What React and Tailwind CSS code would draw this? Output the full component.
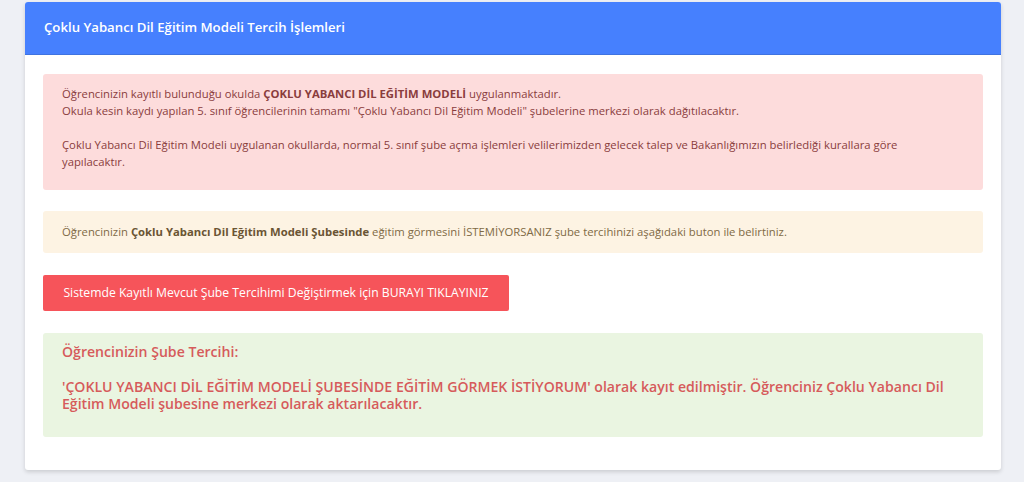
export default function App() {
  return (
    <div className="w-[1024px] h-[482px] bg-[#eef0f5] overflow-hidden" style={{ fontFamily: '"Open Sans", "Noto Sans", sans-serif' }}>
      <div className="ml-[25px] mt-[2px] w-[976px] bg-white rounded-[3px] shadow-[0_2px_4px_rgba(0,0,0,0.15)]">
        <div className="h-[53px] bg-[#4680fe] rounded-t-[3px] flex items-center pl-[19px] border-b border-[#3f73e0]">
          <span className="text-white text-[13.2px] font-semibold">Çoklu Yabancı Dil Eğitim Modeli Tercih İşlemleri</span>
        </div>
        <div className="px-[18px] pt-[19px] pb-[33px] flex flex-col">
          <div className="bg-[#fddcdc] rounded-[3px] pl-[19px] pr-[19px] pt-[11px] pb-[20px] text-[11.3px] leading-[17px] text-[#8a3d3d]">
            <p>Öğrencinizin kayıtlı bulunduğu okulda <b className="font-bold">ÇOKLU YABANCI DİL EĞİTİM MODELİ</b> uygulanmaktadır.</p>
            <p>Okula kesin kaydı yapılan 5. sınıf öğrencilerinin tamamı "Çoklu Yabancı Dil Eğitim Modeli" şubelerine merkezi olarak dağıtılacaktır.</p>
            <p className="mt-[17px] pr-[40px]">Çoklu Yabancı Dil Eğitim Modeli uygulanan okullarda, normal 5. sınıf şube açma işlemleri velilerimizden gelecek talep ve Bakanlığımızın belirlediği kurallara göre yapılacaktır.</p>
          </div>
          <div className="mt-[21px] h-[42px] bg-[#fdf3e3] rounded-[3px] pl-[19px] flex items-center text-[11.3px] text-[#7f6a45]">
            <p>Öğrencinizin <b className="font-bold text-[#6b5534]">Çoklu Yabancı Dil Eğitim Modeli Şubesinde</b> eğitim görmesini İSTEMİYORSANIZ şube tercihinizi aşağıdaki buton ile belirtiniz.</p>
          </div>
          <div className="mt-[22px]">
            <button className="w-[466px] h-[36px] bg-[#f6545a] rounded-[2px] text-white text-[12.2px]">Sistemde Kayıtlı Mevcut Şube Tercihimi Değiştirmek için BURAYI TIKLAYINIZ</button>
          </div>
          <div className="mt-[22px] h-[104px] bg-[#eaf5e1] rounded-[3px] pl-[19px] pr-[19px] pt-[10px] text-[#d65b5b] font-semibold text-[14.1px] leading-[17px]">
            <p>Öğrencinizin Şube Tercihi:</p>
            <p className="mt-[18px]">'ÇOKLU YABANCI DİL EĞİTİM MODELİ ŞUBESİNDE EĞİTİM GÖRMEK İSTİYORUM' olarak kayıt edilmiştir. Öğrenciniz Çoklu Yabancı Dil Eğitim Modeli şubesine merkezi olarak aktarılacaktır.</p>
          </div>
        </div>
      </div>
    </div>
  );
}
